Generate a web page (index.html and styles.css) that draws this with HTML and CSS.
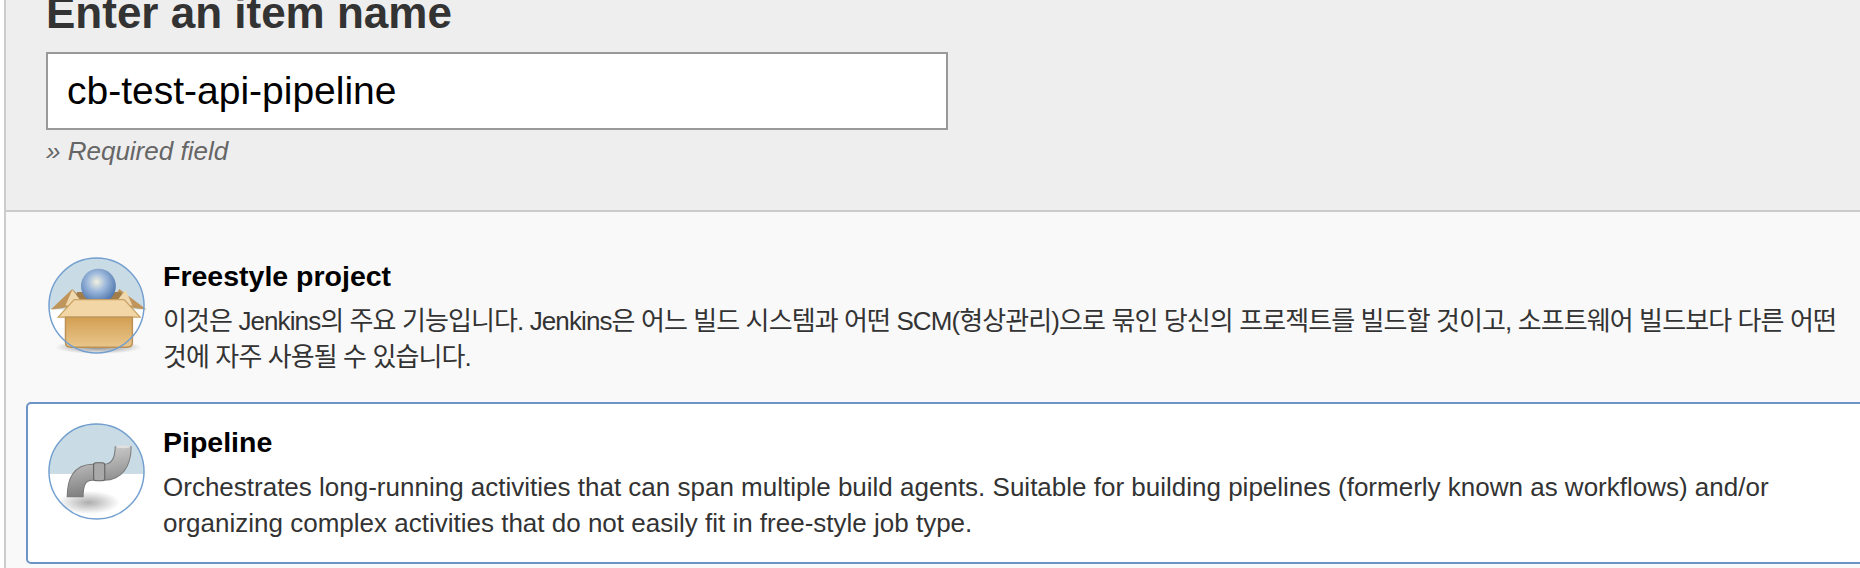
FILE: index.html
```html
<!DOCTYPE html>
<html lang="en">
<head>
    <meta charset="UTF-8">
    <meta name="viewport" content="width=device-width, initial-scale=1.0">
    <title>New Item</title>
    <link rel="stylesheet" href="styles.css">
</head>
<body>
    <div class="page">
        <div class="header">
            <h1>Enter an item name</h1>
            <input class="name-input" type="text" value="cb-test-api-pipeline">
            <div class="hint">» Required field</div>
        </div>

        <ul class="categories">
            <li class="item">
                <svg class="item-icon" viewBox="0 0 100 100">
                    <defs>
                        <clipPath id="circleA"><circle cx="50" cy="50" r="49"/></clipPath>
                        <filter id="softA" x="-10%" y="-10%" width="120%" height="120%"><feGaussianBlur stdDeviation="0.5"/></filter>
                        <radialGradient id="ball" cx="45%" cy="38%" r="60%">
                            <stop offset="0" stop-color="#f1f1df"/>
                            <stop offset="0.45" stop-color="#9db8dc"/>
                            <stop offset="1" stop-color="#5179ae"/>
                        </radialGradient>
                        <linearGradient id="boxFront" x1="0" y1="0" x2="0" y2="1">
                            <stop offset="0" stop-color="#d39f52"/>
                            <stop offset="1" stop-color="#e9c68c"/>
                        </linearGradient>
                        <radialGradient id="shadowA">
                            <stop offset="0" stop-color="#6a6a6a" stop-opacity="0.8"/>
                            <stop offset="1" stop-color="#6a6a6a" stop-opacity="0"/>
                        </radialGradient>
                    </defs>
                    <circle cx="50" cy="50" r="49" fill="#fff"/>
                    <g clip-path="url(#circleA)">
                        <rect x="0" y="0" width="100" height="54" fill="#c9dbe4"/>
                    </g>
                    <g filter="url(#softA)">
                        <ellipse cx="52" cy="93" rx="45" ry="7" fill="url(#shadowA)"/>
                        <path d="M3 54 L25 33 L34 42 L30 50 L12 53 Z" fill="#c0955c"/>
                        <path d="M101.500 54 L73.500 33 L68 42 L74 50 L92 53 Z" fill="#c0955c"/>
                        <path d="M30 36 L75 36 L79 50 L26 50 Z" fill="#a27c48"/>
                        <circle cx="52" cy="30" r="18" fill="url(#ball)"/>
                        <path d="M25 34 L33 44 L27 50 L18 50 Z" fill="#f0d8ae"/>
                        <path d="M80 34 L72 44 L78 50 L87 50 Z" fill="#f0d8ae"/>
                        <path d="M27 44 L78.500 44 L95 62 L10.500 62 Z" fill="#f2d6a6" stroke="#c9a264" stroke-width="1.300"/>
                        <path d="M18 62 L87 62 L87 88 Q87 93 82 93 L23 93 Q18 93 18 88 Z" fill="url(#boxFront)" stroke="#bb9158" stroke-width="1.500"/>
                    </g>
                    <circle cx="50" cy="50" r="49" fill="none" stroke="#729fcf" stroke-width="1.500"/>
                </svg>
                <div class="item-text">
                    <div class="item-title">Freestyle project</div>
                    <div class="item-desc item-desc-ko">이것은 Jenkins의 주요 기능입니다. Jenkins은 어느 빌드 시스템과 어떤 SCM(형상관리)으로 묶인 당신의 프로젝트를 빌드할 것이고, 소프트웨어 빌드보다 다른 어떤 것에 자주 사용될 수 있습니다.</div>
                </div>
            </li>
            <li class="item active">
                <svg class="item-icon" viewBox="0 0 100 100">
                    <defs>
                        <clipPath id="circleB"><circle cx="50" cy="50" r="49"/></clipPath>
                        <filter id="softB" x="-10%" y="-10%" width="120%" height="120%"><feGaussianBlur stdDeviation="0.5"/></filter>
                        <linearGradient id="pipe" x1="0" y1="0" x2="0.200" y2="1">
                            <stop offset="0" stop-color="#d6d6d6"/>
                            <stop offset="0.500" stop-color="#ababab"/>
                            <stop offset="1" stop-color="#7c7c7c"/>
                        </linearGradient>
                        <radialGradient id="shadowB">
                            <stop offset="0" stop-color="#777" stop-opacity="0.6"/>
                            <stop offset="1" stop-color="#777" stop-opacity="0"/>
                        </radialGradient>
                    </defs>
                    <circle cx="50" cy="50" r="49" fill="#fff"/>
                    <g clip-path="url(#circleB)">
                        <rect x="0" y="0" width="100" height="52.500" fill="#c9dbe4"/>
                    </g>
                    <g filter="url(#softB)">
                        <ellipse cx="42" cy="82" rx="32" ry="12" fill="url(#shadowB)"/>
                        <path d="M28 76.500 C28 60 33 50.700 46 50.700 L58 50.700 C70 50.700 77.500 42 77.500 24" fill="none" stroke="#777" stroke-width="17.500"/>
                        <path d="M28 76 C28 60 33 50.700 46 50.700 L58 50.700 C70 50.700 77.500 42 77.500 24.500" fill="none" stroke="url(#pipe)" stroke-width="15.500"/>
                        <rect x="47" y="41" width="11.500" height="18.500" rx="2.500" fill="#a9a9a9" stroke="#666" stroke-width="1.200"/>
                        <ellipse cx="77.500" cy="24.500" rx="7.500" ry="1.600" fill="#e0e0e0"/>
                    </g>
                    <circle cx="50" cy="50" r="49" fill="none" stroke="#729fcf" stroke-width="1.500"/>
                </svg>
                <div class="item-text">
                    <div class="item-title">Pipeline</div>
                    <div class="item-desc">Orchestrates long-running activities that can span multiple build agents. Suitable for building pipelines (formerly known as workflows) and/or organizing complex activities that do not easily fit in free-style job type.</div>
                </div>
            </li>
        </ul>
    </div>
</body>
</html>
```

FILE: styles.css
```css
* {
    margin: 0;
    padding: 0;
    box-sizing: border-box;
}

html, body {
    height: 100%;
    overflow: hidden;
}

body {
    background-color: #fff;
    font-family: 'Liberation Sans', 'Noto Sans CJK KR', sans-serif;
    color: #333;
}

.page {
    height: 568px;
    margin-left: 4px;
    border-left: 2px solid #ccc;
    background-color: #f9f9f9;
}

.header {
    height: 212px;
    padding-left: 40px;
    background-color: #eee;
    border-bottom: 2px solid #ccc;
}

/* top of the heading is scrolled off in the reference, so the line box is short */
h1 {
    height: 52px;
    font-size: 44px;
    line-height: 26px;
    font-weight: bold;
    color: #333;
}

.name-input {
    display: block;
    width: 902px;
    height: 78px;
    padding: 0 19px;
    border: 2px solid #999;
    background-color: #fff;
    font-family: inherit;
    font-size: 39px;
    color: #000;
    outline: none;
}

.hint {
    margin-top: 3px;
    font-size: 26px;
    line-height: 36px;
    font-style: italic;
    color: #666;
}

.categories {
    list-style: none;
    padding-left: 20px;
    padding-top: 24px;
}

.item {
    display: flex;
    width: 1900px;
    height: 166px;
    padding-left: 20px;
    padding-top: 19px;
    border: 2px solid transparent;
    border-radius: 5px;
}

.item.active {
    height: 162px;
    background-color: #fff;
    border-color: #6d94c6;
}

.item-icon {
    flex: none;
    width: 97px;
    height: 97px;
    overflow: visible;
}

.item-text {
    width: 1696px;
    margin-left: 18px;
    padding-top: 1px;
}

.item-title {
    font-size: 28.5px;
    line-height: 36px;
    font-weight: bold;
    color: #000;
}

.item-desc {
    margin-top: 9px;
    font-size: 26px;
    line-height: 36px;
    color: #333;
}

.item-desc-ko {
    letter-spacing: -0.9px;
    word-break: keep-all;
}
```
